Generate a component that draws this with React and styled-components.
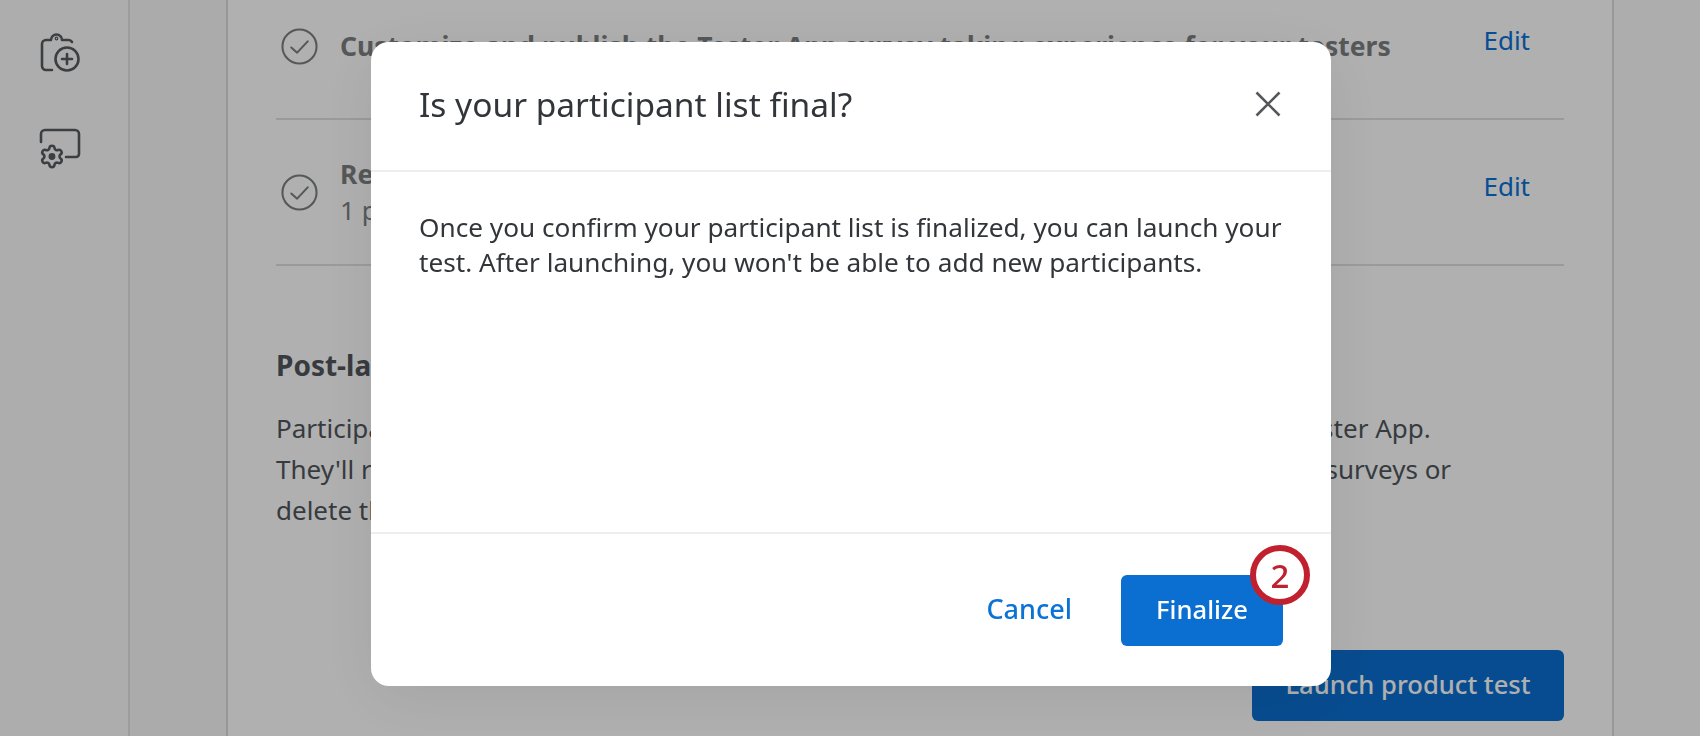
import React from 'react';
import styled, { createGlobalStyle } from 'styled-components';

const GlobalStyle = createGlobalStyle`
    html, body {
        margin: 0;
        padding: 0;
        height: 100%;
        background: #ffffff;
        font-family: "Noto Sans", "Open Sans", sans-serif;
    }
    * {
        box-sizing: border-box;
    }
    a {
        text-decoration: none;
    }
`;

const Page = styled.div`
    display: flex;
    height: 736px;
    overflow: hidden;
    color: #50565c;
`;

const Rail = styled.nav`
    width: 130px;
    flex-shrink: 0;
    display: flex;
    flex-direction: column;
    align-items: center;
    gap: 55px;
    padding: 31px 8px 0 0;
    background: #fbfbfb;
    border-right: 2px solid #e4e4e4;
`;

const SubNav = styled.div`
    width: 98px;
    flex-shrink: 0;
    background: #f8f8f8;
    border-right: 2px solid #dcdcdc;
`;

const Content = styled.main`
    width: 1386px;
    flex-shrink: 0;
    margin-top: -26px;
    padding: 0 48px 0 48px;
    border-right: 2px solid #dcdcdc;
`;

const Gutter = styled.div`
    flex: 1;
    background: #fbfbfb;
`;

const StepRow = styled.div`
    display: flex;
    align-items: center;
    height: 146px;
    border-bottom: 2px solid #e0e0e0;
`;

const StepIcon = styled.svg`
    width: 37px;
    height: 37px;
    flex-shrink: 0;
    margin: 0 22px 0 5px;
    color: #7c7f82;
`;

const StepText = styled.div`
    flex: 1;
    font-size: 26px;
    line-height: 36px;
    color: #7c7f82;
    white-space: nowrap;
`;

const StepTitle = styled.div`
    font-weight: 700;
    font-size: 26.5px;
    margin-top: -1px;
`;

const EditLink = styled.a`
    align-self: flex-start;
    margin: ${props => props.$top}px 34px 0 0;
    font-size: 26px;
    line-height: 36px;
    color: #0b72d6;
`;

const SectionTitle = styled.h2`
    margin: 79px 0 0;
    font-size: 28px;
    line-height: 40px;
    font-weight: 700;
`;

const Paragraph = styled.p`
    margin: 23px 0 0;
    font-size: 26px;
    line-height: 41px;
    white-space: nowrap;
`;

const LaunchRow = styled.div`
    display: flex;
    justify-content: flex-end;
    margin-top: 119px;
`;

const Button = styled.button`
    position: relative;
    height: ${props => props.$height}px;
    padding: 0 0 3px;
    width: ${props => props.$width}px;
    border: none;
    border-radius: 6px;
    background: #0b6fd1;
    color: #ffffff;
    font-family: inherit;
    font-size: 25.6px;
    font-weight: 500;
`;

const Overlay = styled.div`
    position: fixed;
    inset: 0;
    display: flex;
    justify-content: center;
    align-items: flex-start;
    padding: 42px 0 0 2px;
    background: rgba(0, 0, 0, 0.31);
`;

const Modal = styled.div`
    width: 960px;
    height: 644px;
    display: flex;
    flex-direction: column;
    background: #ffffff;
    border-radius: 18px;
    box-shadow: 0 12px 64px rgba(0, 0, 0, 0.08);
    color: #32363a;
`;

const ModalHeader = styled.div`
    height: 130px;
    flex-shrink: 0;
    display: flex;
    align-items: center;
    justify-content: space-between;
    padding: 0 50px 4px 48px;
    border-bottom: 2px solid #eeeeee;
`;

const ModalTitle = styled.h1`
    margin: 0;
    font-size: 33.5px;
    font-weight: 400;
`;

const CloseIcon = styled.svg`
    width: 26px;
    height: 26px;
    color: #55585b;
`;

const ModalBody = styled.div`
    flex: 1;
    padding: 38px 48px 0;
    font-size: 26.2px;
    line-height: 35px;
    border-bottom: 2px solid #eeeeee;
`;

const ModalFooter = styled.div`
    height: 152px;
    flex-shrink: 0;
    display: flex;
    justify-content: flex-end;
    align-items: flex-start;
    gap: 49px;
    padding: 41px 48px 0 0;
`;

const CancelLink = styled.a`
    font-size: 27px;
    font-weight: 500;
    line-height: 67px;
    color: #0b72d6;
`;

const StepBadge = styled.span`
    position: absolute;
    top: -30px;
    right: -27px;
    width: 60px;
    height: 60px;
    display: flex;
    align-items: center;
    justify-content: center;
    background: #ffffff;
    border: 6px solid #c1202f;
    border-radius: 50%;
    color: #c1202f;
    font-size: 33px;
    font-weight: 500;
`;

const ClipboardPlusIcon = () => (
    <svg width="40" height="42" viewBox="0 0 40 42" fill="none" stroke="#585c60" strokeWidth="2.6" strokeLinecap="round" strokeLinejoin="round">
        <path d="M12 39H6a4 4 0 0 1-4-4V13a4 4 0 0 1 4-4h5a5.5 5.5 0 0 1 11 0h6a4 4 0 0 1 4 2" />
        <circle cx="16.5" cy="7.5" r="0.6" />
        <circle cx="27" cy="28" r="11.5" />
        <path d="M27 23v10M22 28h10" />
    </svg>
);

const ScreenGearIcon = () => (
    <svg width="42" height="42" viewBox="0 0 42 42" fill="none" stroke="#585c60" strokeWidth="2.6" strokeLinecap="round" strokeLinejoin="round">
        <path d="M2 14V6a4 4 0 0 1 4-4h30a4 4 0 0 1 4 4v20a3 3 0 0 1-3 3H27" />
        <g transform="translate(0 15.5) scale(1.08)" strokeWidth="2.4">
            <path d="M9.671 4.136a2.34 2.34 0 0 1 4.659 0 2.34 2.34 0 0 0 3.319 1.915 2.34 2.34 0 0 1 2.33 4.033 2.34 2.34 0 0 0 0 3.831 2.34 2.34 0 0 1-2.33 4.033 2.34 2.34 0 0 0-3.319 1.915 2.34 2.34 0 0 1-4.659 0 2.34 2.34 0 0 0-3.32-1.915 2.34 2.34 0 0 1-2.33-4.033 2.34 2.34 0 0 0 0-3.831A2.34 2.34 0 0 1 6.35 6.051a2.34 2.34 0 0 0 3.32-1.915" />
            <circle cx="12" cy="12" r="2" fill="#585c60" />
        </g>
    </svg>
);

const CheckCircle = () => (
    <StepIcon viewBox="0 0 36 36" fill="none" stroke="currentColor" strokeWidth="2" strokeLinecap="round" strokeLinejoin="round">
        <circle cx="18" cy="18" r="16.6" />
        <path d="M10 19l5.7 5L26 13" />
    </StepIcon>
);

const App = () => {
    return (
        <>
            <GlobalStyle />
            <Page>
                <Rail>
                    <ClipboardPlusIcon />
                    <ScreenGearIcon />
                </Rail>
                <SubNav />
                <Content>
                    <StepRow>
                        <CheckCircle />
                        <StepText>
                            <StepTitle>Customize and publish the Tester App survey taking experience for your testers</StepTitle>
                        </StepText>
                        <EditLink href="#" $top={48}>Edit</EditLink>
                    </StepRow>
                    <StepRow>
                        <CheckCircle />
                        <StepText>
                            <StepTitle>Review your participant list</StepTitle>
                            1 participant added
                        </StepText>
                        <EditLink href="#" $top={48}>Edit</EditLink>
                    </StepRow>
                    <SectionTitle>Post-launch</SectionTitle>
                    <Paragraph>
                        Participants can access the product test as soon as they download and log in to the Tester App.<br />
                        They'll receive notifications when it is time to test, and can then complete all assigned surveys or<br />
                        delete the app once the test has ended.
                    </Paragraph>
                    <LaunchRow>
                        <Button $width={312} $height={71}>Launch product test</Button>
                    </LaunchRow>
                </Content>
                <Gutter />
            </Page>
            <Overlay>
                <Modal>
                    <ModalHeader>
                        <ModalTitle>Is your participant list final?</ModalTitle>
                        <CloseIcon viewBox="0 0 26 26" fill="none" stroke="currentColor" strokeWidth="2.6">
                            <path d="M1.5 1.5l23 23M24.5 1.5l-23 23" />
                        </CloseIcon>
                    </ModalHeader>
                    <ModalBody>
                        Once you confirm your participant list is finalized, you can launch your test. After launching, you won't be able to add new participants.
                    </ModalBody>
                    <ModalFooter>
                        <CancelLink href="#">Cancel</CancelLink>
                        <Button $width={162} $height={71}>
                            Finalize
                            <StepBadge>2</StepBadge>
                        </Button>
                    </ModalFooter>
                </Modal>
            </Overlay>
        </>
    );
};

export default App;
